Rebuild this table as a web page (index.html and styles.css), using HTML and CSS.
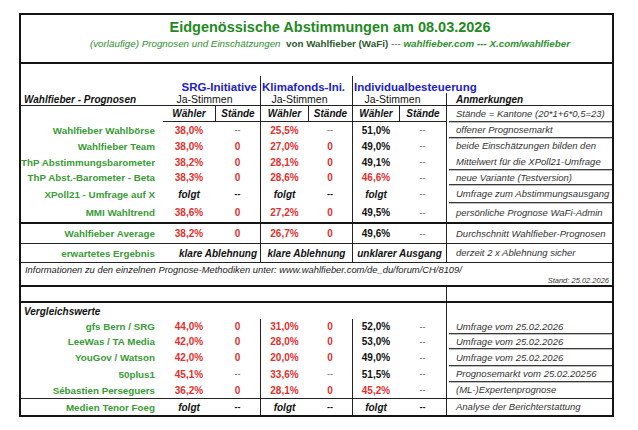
FILE: index.html
```html
<!DOCTYPE html>
<html lang="de">
<head>
<meta charset="utf-8">
<title>Eidgenössische Abstimmungen am 08.03.2026</title>
<link rel="stylesheet" href="styles.css">
</head>
<body>
<div class="sheet">
  <div class="head">
    <div class="title">Eidgenössische Abstimmungen am 08.03.2026</div>
    <div class="sub"><i>(vorläufige) Prognosen und Einschätzungen</i>&nbsp; <b class="von">von Wahlfieber (WaFi)</b> <span class="dash">---</span> <b><i>wahlfieber.com --- X.com/wahlfieber</i></b></div>
  </div>

  <div class="row spacer"></div>

  <div class="row groups">
    <div class="c"></div>
    <div class="c span2 grp right">SRG-Initiative</div>
    <div class="c span2 grp vl">Klimafonds-Ini.</div>
    <div class="c span3 grp vl">Individualbesteuerung</div>
  </div>

  <div class="row ja">
    <div class="c hl">Wahlfieber - Prognosen</div>
    <div class="c span2 js">Ja-Stimmen</div>
    <div class="c span2 js vl">Ja-Stimmen</div>
    <div class="c span2 js vl">Ja-Stimmen</div>
    <div class="c hl vl anmh">Anmerkungen</div>
  </div>

  <div class="row wh">
    <div class="c"></div>
    <div class="c hw ul">Wähler</div>
    <div class="c hw ul vl">Stände</div>
    <div class="c hw ul vl">Wähler</div>
    <div class="c hw ul vl">Stände</div>
    <div class="c hw ul vl">Wähler</div>
    <div class="c hw ul vl">Stände</div>
    <div class="c anm vl"><span class="u">Stände = Kantone (20*1+6*0,5=23)</span></div>
  </div>

  <div class="row h16">
    <div class="c lab">Wahlfieber Wahlbörse</div>
    <div class="c v r">38,0%</div><div class="c d">--</div>
    <div class="c v r vl">25,5%</div><div class="c d">--</div>
    <div class="c v vl">51,0%</div><div class="c d">--</div>
    <div class="c anm vl"><span class="u">offener Prognosemarkt</span></div>
  </div>
  <div class="row h16">
    <div class="c lab">Wahlfieber Team</div>
    <div class="c v r">38,0%</div><div class="c v r">0</div>
    <div class="c v r vl">27,0%</div><div class="c v r">0</div>
    <div class="c v vl">49,0%</div><div class="c d">--</div>
    <div class="c anm vl"><span class="u none">beide Einschätzungen bilden den</span></div>
  </div>
  <div class="row h16">
    <div class="c lab">ThP Abstimmungsbarometer</div>
    <div class="c v r">38,2%</div><div class="c v r">0</div>
    <div class="c v r vl">28,1%</div><div class="c v r">0</div>
    <div class="c v vl">49,1%</div><div class="c d">--</div>
    <div class="c anm vl"><span class="u">Mittelwert für die XPoll21-Umfrage</span></div>
  </div>
  <div class="row h15">
    <div class="c lab">ThP Abst.-Barometer - Beta</div>
    <div class="c v r">38,3%</div><div class="c v r">0</div>
    <div class="c v r vl">28,6%</div><div class="c v r">0</div>
    <div class="c v r vl">46,6%</div><div class="c d">--</div>
    <div class="c anm vl"><span class="u">neue Variante (Testversion)</span></div>
  </div>
  <div class="row h18">
    <div class="c lab">XPoll21 - Umfrage auf X</div>
    <div class="c f">folgt</div><div class="c db">--</div>
    <div class="c f vl">folgt</div><div class="c db">--</div>
    <div class="c f vl">folgt</div><div class="c d">--</div>
    <div class="c anm vl"><span class="u">Umfrage zum Abstimmungsausgang</span></div>
  </div>
  <div class="row h19 thick">
    <div class="c lab">MMI Wahltrend</div>
    <div class="c v r">38,6%</div><div class="c v r">0</div>
    <div class="c v r vl">27,2%</div><div class="c v r">0</div>
    <div class="c v vl">49,5%</div><div class="c d">--</div>
    <div class="c anm vl"><span class="u none">persönliche Prognose WaFi-Admin</span></div>
  </div>

  <div class="row h19 thin">
    <div class="c lab">Wahlfieber Average</div>
    <div class="c v r">38,2%</div><div class="c v r">0</div>
    <div class="c v r vl">26,7%</div><div class="c v r">0</div>
    <div class="c v vl">49,6%</div><div class="c d">--</div>
    <div class="c anm vl"><span class="u none">Durchschnitt Wahlfieber-Prognosen</span></div>
  </div>
  <div class="row h18 thin">
    <div class="c lab">erwartetes Ergebnis</div>
    <div class="c span2 f right">klare Ablehnung</div>
    <div class="c span2 f vl">klare Ablehnung</div>
    <div class="c span2 f vl">unklarer Ausgang</div>
    <div class="c anm vl"><span class="u none">derzeit 2 x Ablehnung sicher</span></div>
  </div>
  <div class="info thick">
    <div class="infotext">Informationen zu den einzelnen Prognose-Methodiken unter: www.wahlfieber.com/de_du/forum/CH/8109/</div>
    <div class="stand">Stand: 25.02.2026</div>
  </div>
  <div class="row h14 thick">
    <div class="c span7"></div>
    <div class="c vl"></div>
  </div>
  <div class="row h16">
    <div class="c span7 hl">Vergleichswerte</div>
    <div class="c vl"></div>
  </div>

  <div class="row h15">
    <div class="c lab">gfs Bern / SRG</div>
    <div class="c v r">44,0%</div><div class="c v r">0</div>
    <div class="c v r vl">31,0%</div><div class="c v r">0</div>
    <div class="c v vl">52,0%</div><div class="c d">--</div>
    <div class="c anm vl"><span class="u">Umfrage vom 25.02.2026</span></div>
  </div>
  <div class="row h15">
    <div class="c lab">LeeWas / TA Media</div>
    <div class="c v r">42,0%</div><div class="c v r">0</div>
    <div class="c v r vl">28,0%</div><div class="c v r">0</div>
    <div class="c v vl">53,0%</div><div class="c d">--</div>
    <div class="c anm vl"><span class="u">Umfrage vom 25.02.2026</span></div>
  </div>
  <div class="row h17">
    <div class="c lab">YouGov / Watson</div>
    <div class="c v r">42,0%</div><div class="c v r">0</div>
    <div class="c v r vl">20,0%</div><div class="c v r">0</div>
    <div class="c v vl">49,0%</div><div class="c d">--</div>
    <div class="c anm vl"><span class="u">Umfrage vom 25.02.2026</span></div>
  </div>
  <div class="row h16">
    <div class="c lab">50plus1</div>
    <div class="c v r">45,1%</div><div class="c d">--</div>
    <div class="c v r vl">33,6%</div><div class="c d">--</div>
    <div class="c v vl">51,5%</div><div class="c d">--</div>
    <div class="c anm vl"><span class="u">Prognosemarkt vom 25.02.20256</span></div>
  </div>
  <div class="row h16 thin">
    <div class="c lab">Sébastien Perseguers</div>
    <div class="c v r">36,2%</div><div class="c v r">0</div>
    <div class="c v r vl">28,1%</div><div class="c v r">0</div>
    <div class="c v r vl">45,2%</div><div class="c d">--</div>
    <div class="c anm vl"><span class="u none">(ML-)Expertenprognose</span></div>
  </div>
  <div class="row h16">
    <div class="c lab">Medien Tenor Foeg</div>
    <div class="c f">folgt</div><div class="c db">--</div>
    <div class="c f vl">folgt</div><div class="c db">--</div>
    <div class="c f vl">folgt</div><div class="c db">--</div>
    <div class="c anm vl"><span class="u none">Analyse der Berichterstattung</span></div>
  </div>
</div>
</body>
</html>
```
FILE: styles.css
```css
html, body {
  margin: 0;
  background: #ffffff;
}
body {
  padding: 13px 0 0 19px;
  font-family: "Liberation Sans", Arial, sans-serif;
  color: #111;
}
.sheet {
  width: 595px;
  box-sizing: border-box;
  border: 2px solid #151515;
}
.head {
  height: 47px;
  border-bottom: 2px solid #151515;
  display: flex;
  flex-direction: column;
  align-items: center;
  padding-left: 27px;
}
.title {
  margin-top: 4px;
  font-size: 14.5px;
  line-height: 17px;
  font-weight: bold;
  color: #1f8a1f;
}
.sub {
  margin-top: 2px;
  font-size: 9.8px;
  line-height: 12px;
  color: #2f8f2f;
  white-space: nowrap;
}
.sub .von { color: #2d5a2d; }
.sub .dash { color: #555; }

.row {
  display: grid;
  grid-template-columns: 142px 52px 45px 48px 44px 47px 47px 166px;
}
.row.spacer { height: 12px; }
.row.groups { height: 17px; }
.row.ja { height: 12px; border-bottom: 1px solid #222; }
.row.wh { height: 16px; }
.h14 { height: 14px; }
.h15 { height: 15px; }
.h16 { height: 16px; }
.h17 { height: 17px; }
.h18 { height: 18px; }
.h19 { height: 19px; }
.thick { border-bottom: 2px solid #151515; }
.thin { border-bottom: 1px solid #222; }

.c {
  box-sizing: border-box;
  display: flex;
  align-items: center;
  justify-content: center;
  white-space: nowrap;
  min-width: 0;
}
.span2 { grid-column: span 2; }
.span3 { grid-column: span 3; }
.span7 { grid-column: span 7; }
.vl { border-left: 1px solid #222; }
.right { justify-content: flex-end; padding-right: 3px; }

.grp {
  font-size: 11.5px;
  font-weight: bold;
  color: #2121c8;
  align-items: flex-end;
}
.grp.vl { justify-content: flex-start; padding-left: 1px; }
.js {
  font-size: 10.5px;
  padding-right: 14px;
  color: #111;
}
.hl {
  justify-content: flex-start;
  padding-left: 3px;
  font-size: 10px;
  font-weight: bold;
  font-style: italic;
}
.anmh { padding-left: 9px; }
.hw {
  font-size: 10px;
  font-weight: bold;
  font-style: italic;
}
.ul { border-bottom: 1px solid #222; }

.lab {
  justify-content: flex-end;
  padding-right: 8px;
  font-size: 9.8px;
  font-weight: bold;
  color: #3a9a36;
}
.v {
  font-size: 10px;
  font-weight: bold;
  color: #111;
}
.v.r { color: #e0302e; }
.d {
  font-size: 9px;
  color: #555;
}
.db {
  font-size: 9px;
  font-weight: bold;
  color: #111;
}
.f {
  font-size: 10px;
  font-weight: bold;
  font-style: italic;
  color: #111;
}

.anm {
  justify-content: flex-start;
  align-items: stretch;
  padding-left: 2px;
}
.anm .u {
  flex: 1;
  display: flex;
  align-items: center;
  padding-left: 7px;
  font-size: 9.5px;
  font-style: italic;
  color: #333;
  border-bottom: 1px solid #3a3a3a;
  box-shadow: 0 1px 0 #bdbdbd;
}
.anm .u.none {
  border-bottom: 1px solid transparent;
  box-shadow: none;
}

.info {
  height: 22px;
  display: flex;
  flex-direction: column;
  padding: 0 3px 0 4px;
}
.infotext {
  font-size: 9.4px;
  font-style: italic;
  line-height: 13px;
  color: #222;
}
.stand {
  align-self: flex-end;
  font-size: 7.5px;
  font-style: italic;
  line-height: 9px;
  color: #333;
}
```
